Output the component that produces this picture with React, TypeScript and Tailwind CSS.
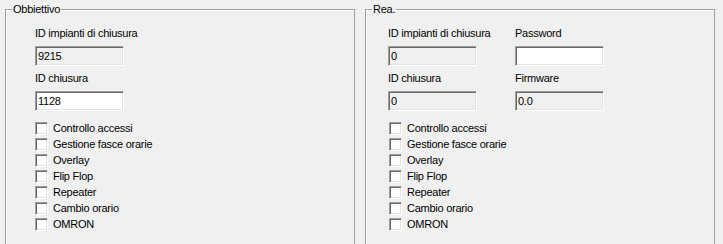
import React from 'react';

const opts = [
  'Controllo accessi',
  'Gestione fasce orarie',
  'Overlay',
  'Flip Flop',
  'Repeater',
  'Cambio orario',
  'OMRON',
];

const font = { fontFamily: '"Liberation Sans", Arial, sans-serif' };

const TextBox: React.FC<{ value?: string; enabled?: boolean }> = ({ value = '', enabled }) => (
  <div
    className={`w-[89px] h-[20px] flex items-center pl-[1px] border border-t-[#a0a0a0] border-l-[#a0a0a0] border-b-white border-r-white shadow-[inset_1px_1px_0_#696969,inset_-1px_-1px_0_#e3e3e3] ${
      enabled ? 'bg-white' : 'bg-[#f0f0f0]'
    }`}
  >
    <span className="pl-[1px] leading-[13px]">{value}</span>
  </div>
);

const Field: React.FC<{ label: string; value?: string; enabled?: boolean }> = ({ label, value, enabled }) => (
  <div className="flex flex-col">
    <div className="h-[13px] leading-[13px] mb-[6px]">{label}</div>
    <TextBox value={value} enabled={enabled} />
  </div>
);

const CheckList: React.FC<{ offset?: boolean }> = ({ offset }) => (
  <div className="flex flex-col mt-[9px]">
    {opts.map((o) => (
      <div key={o} className="h-[16px] flex items-center">
        <div
          className={`w-[13px] h-[13px] bg-white border border-t-[#a0a0a0] border-l-[#a0a0a0] border-b-white border-r-white shadow-[inset_1px_1px_0_#696969,inset_-1px_-1px_0_#e3e3e3] ${
            offset ? 'ml-[1px]' : ''
          }`}
        />
        <span className="ml-[5px] leading-[13px]">{o}</span>
      </div>
    ))}
  </div>
);

const Group: React.FC<{ title: string; pad: string; children: React.ReactNode }> = ({ title, pad, children }) => (
  <fieldset className="w-[350px] h-[270px] border border-[#a0a0a0] shadow-[inset_1px_1px_0_#fff]">
    <legend className="ml-[6px] px-[1px] leading-[13px]">{title}</legend>
    <div className={`flex flex-col pt-[11px] ${pad}`}>{children}</div>
  </fieldset>
);

export default function App() {
  return (
    <div
      className="w-[723px] h-[244px] overflow-hidden bg-[#f0f0f0] text-black text-[11px] tracking-[-0.25px] flex gap-[10px] pl-[5px] pt-[3px]"
      style={font}
    >
      <Group title="Obbiettivo" pad="pl-[29px]">
        <div className="flex flex-col gap-[6px]">
          <Field label="ID impianti di chiusura" value="9215" />
          <Field label="ID chiusura" value="1128" enabled />
        </div>
        <CheckList />
      </Group>
      <Group title="Rea." pad="pl-[22px]">
        <div className="grid grid-cols-[127px_89px] gap-y-[6px]">
          <Field label="ID impianti di chiusura" value="0" />
          <Field label="Password" enabled />
          <Field label="ID chiusura" value="0" />
          <Field label="Firmware" value="0.0" />
        </div>
        <CheckList offset />
      </Group>
    </div>
  );
}
